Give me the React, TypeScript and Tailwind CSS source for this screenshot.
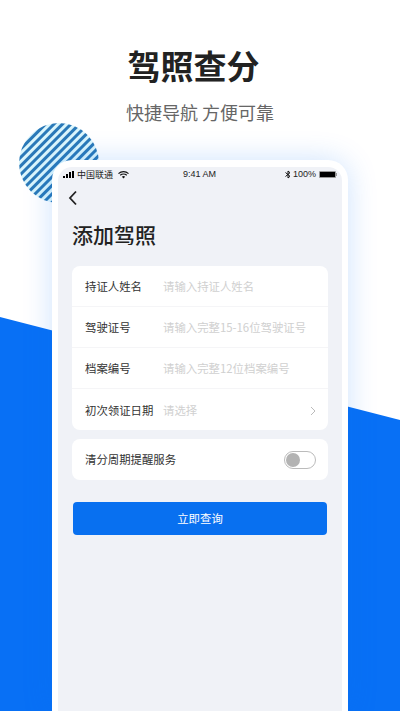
const cjk = "font-['Noto_Sans_CJK_SC','Noto_Sans',sans-serif]";

const rows = [
  { label: "持证人姓名", hint: "请输入持证人姓名" },
  { label: "驾驶证号", hint: "请输入完整15-16位驾驶证号" },
  { label: "档案编号", hint: "请输入完整12位档案编号" },
  { label: "初次领证日期", hint: "请选择", arrow: true },
];

function StatusBar() {
  return (
    <div className="relative flex h-[15px] items-center justify-between px-[5px] text-[9px] text-[#222]">
      <div className="flex items-center gap-[3px]">
        <div className="flex items-end gap-px">
          <span className="h-[2px] w-[2px] bg-black" />
          <span className="h-[4px] w-[2px] bg-black" />
          <span className="h-[6px] w-[2px] bg-black" />
          <span className="h-[7px] w-[2px] bg-black" />
        </div>
        <span>中国联通</span>
        <svg width="11" height="8" viewBox="0 0 11 8" className="ml-[2px]">
          <path d="M0.5 2.6C3.4 0 7.6 0 10.5 2.6M2.2 4.2C4 2.7 7 2.7 8.8 4.2" fill="none" stroke="#111" strokeWidth="1.2" />
          <path d="M3.9 5.7C4.9 4.9 6.1 4.9 7.1 5.7L5.5 7.6Z" fill="#111" />
        </svg>
      </div>
      <span className="absolute left-[125px] font-['Liberation_Sans',sans-serif] text-[9px]">9:41 AM</span>
      <div className="flex items-center gap-[2px] font-['Liberation_Sans',sans-serif] text-[9px]">
        <svg width="6" height="9" viewBox="0 0 6 9">
          <path d="M0.5 2.5L5 6.3L3 8V1L5 2.7L0.5 6.5" fill="none" stroke="#111" strokeWidth="1" />
        </svg>
        <span>100%</span>
        <div className="ml-px flex items-center">
          <div className="h-[7px] w-[17px] rounded-[1px] border border-[#999] bg-black" />
          <div className="h-[3px] w-px bg-[#999]" />
        </div>
      </div>
    </div>
  );
}

export default function App() {
  return (
    <div className={`relative h-[711px] w-[400px] overflow-hidden bg-white ${cjk}`}>
      {/* blue slanted background */}
      <div className="absolute inset-0 bg-[#0870f5] [clip-path:polygon(0_317px,400px_420px,400px_711px,0_711px)]" />

      {/* striped circle */}
      <svg width="80" height="80" viewBox="0 0 80 80" className="absolute left-[19px] top-[123px]">
        <defs>
          <pattern id="stripes" width="6" height="6" patternUnits="userSpaceOnUse" patternTransform="rotate(-45)">
            <rect width="6" height="6" fill="#dbf6fc" />
            <rect width="6" height="3" fill="#2a79b8" />
          </pattern>
        </defs>
        <circle cx="40" cy="40" r="40" fill="url(#stripes)" />
      </svg>

      <div className="relative flex h-full flex-col items-center">
        <h1 className="mt-[40px] mr-[13px] text-[33px] font-bold leading-[50px] text-[#222]">驾照查分</h1>
        <p className="mt-[7px] text-[18px] leading-[30px] text-[#666]">快捷导航 方便可靠</p>

        {/* phone */}
        <div className="mt-[33px] w-[296px] flex-1 rounded-t-[20px] bg-white px-[6px] pt-[7px] shadow-[0_0_30px_rgba(10,112,245,0.2)]">
          <div className="h-full rounded-t-[14px] bg-[#f0f2f7] px-[14px]">
            <div className="-mx-[14px]">
              <StatusBar />
            </div>
            <svg width="10" height="16" viewBox="0 0 10 16" className="mt-[8px] ml-[-4px]">
              <path d="M8 1.5L2 8L8 14.5" fill="none" stroke="#222" strokeWidth="1.8" />
            </svg>
            <h2 className="mt-[13px] text-[21px] font-medium leading-[30px] text-[#222]">添加驾照</h2>

            <div className="mt-[17px] rounded-[8px] bg-white">
              {rows.map((r, i) => (
                <div
                  key={r.label}
                  className={`flex h-[41px] items-center pl-[13px] pr-[12px] pt-[2px] text-[11.4px] ${i < rows.length - 1 ? "border-b border-[#f5f5f7]" : ""}`}
                >
                  <span className="w-[78px] shrink-0 whitespace-nowrap text-[#333]">{r.label}</span>
                  <span className="flex-1 whitespace-nowrap text-[#d0d0d0]">{r.hint}</span>
                  {r.arrow && (
                    <svg width="6" height="10" viewBox="0 0 6 10">
                      <path d="M1 1L5 5L1 9" fill="none" stroke="#bbb" strokeWidth="1" />
                    </svg>
                  )}
                </div>
              ))}
            </div>

            <div className="mt-[9px] flex h-[41px] items-center justify-between rounded-[8px] bg-white pl-[13px] pr-[12px] text-[11.4px] text-[#333]">
              <span>清分周期提醒服务</span>
              <div className="flex h-[18px] w-[32px] items-center rounded-full border border-[#bbb] bg-white pl-px">
                <span className="h-[14px] w-[14px] rounded-full bg-[#b3b3b3]" />
              </div>
            </div>

            <button className="mt-[22px] ml-px flex h-[33px] w-[254px] items-center justify-center rounded-[4px] bg-[#0870f0] text-[11.4px] text-white">
              立即查询
            </button>
          </div>
        </div>
      </div>
    </div>
  );
}
